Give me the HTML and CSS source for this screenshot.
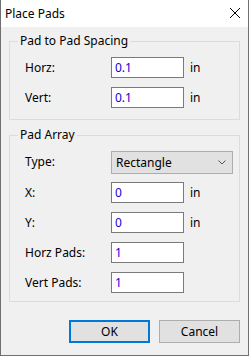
FILE: index.html
```html
<!DOCTYPE html>
<html lang="en">
<head>
    <meta charset="UTF-8">
    <title>Place Pads</title>
    <link rel="stylesheet" href="styles.css">
</head>
<body>
    <div class="window">
        <div class="titlebar">
            <span class="title">Place Pads</span>
            <svg class="close" width="12" height="12" viewBox="0 0 12 12">
                <path d="M1 1 L11 11 M11 1 L1 11" stroke="#000" stroke-width="1" fill="none"/>
            </svg>
        </div>

        <div class="client">
            <!-- 패드 간격 -->
            <fieldset class="group spacing">
                <legend>Pad to Pad Spacing</legend>
                <label>Horz:</label>
                <input type="text" value="0.1">
                <span class="unit">in</span>
                <label>Vert:</label>
                <input type="text" value="0.1">
                <span class="unit">in</span>
            </fieldset>

            <!-- 패드 배열 -->
            <fieldset class="group array">
                <legend>Pad Array</legend>
                <label>Type:</label>
                <div class="combo">
                    <span>Rectangle</span>
                    <svg width="8" height="5" viewBox="0 0 8 5">
                        <path d="M0.5 0.5 L4 4 L7.5 0.5" stroke="#555" stroke-width="1" fill="none"/>
                    </svg>
                </div>
                <label>X:</label>
                <input type="text" value="0">
                <span class="unit">in</span>
                <label>Y:</label>
                <input type="text" value="0">
                <span class="unit">in</span>
                <label>Horz Pads:</label>
                <input type="text" value="1">
                <span></span>
                <label>Vert Pads:</label>
                <input type="text" value="1">
                <span></span>
            </fieldset>

            <div class="buttons">
                <button class="btn default">OK</button>
                <button class="btn">Cancel</button>
            </div>
        </div>
    </div>
</body>
</html>
```

FILE: styles.css
```css
* {
    margin: 0;
    padding: 0;
    box-sizing: border-box;
}

body {
    font-family: "Noto Sans", "Liberation Sans", sans-serif;
    font-size: 12px;
    color: #000;
    background: #f0f0f0;
}

/* 창 틀 */
.window {
    width: 249px;
    height: 356px;
    border: 1px solid #6f6f6f;
    border-top: 0;
    display: flex;
    flex-direction: column;
}

.titlebar {
    height: 27px;
    background: #fff;
    display: flex;
    align-items: center;
    justify-content: space-between;
    padding: 0 7px 1px 4px;
}

.close {
    display: block;
}

.client {
    flex: 1;
    background: #f0f0f0;
    padding: 6px 8px 0;
    display: flex;
    flex-direction: column;
}

/* 그룹 박스 */
.group {
    border: 1px solid #dcdcdc;
    padding: 8px 6px 11px 15px;
    display: grid;
    grid-template-columns: 86px 73px auto;
    row-gap: 9px;
    align-items: center;
}

.group legend {
    padding: 0 2px;
    margin-left: -7px;
    line-height: 16px;
}

.group.array {
    margin-top: 7px;
    padding-bottom: 8px;
}

.group label {
    line-height: 16px;
}

.group input {
    width: 73px;
    height: 21px;
    border: 1px solid #7a7a7a;
    background: #fff;
    font: inherit;
    color: #1400d4;
    padding: 0 3px;
    outline: none;
}

.unit {
    padding-left: 6px;
}

.combo {
    grid-column: 2 / 4;
    width: 122px;
    height: 23px;
    border: 1px solid #adadad;
    background: #e1e1e1;
    display: flex;
    align-items: center;
    justify-content: space-between;
    padding: 0 6px 0 4px;
    margin-bottom: -1px;
}

.combo svg {
    display: block;
}

/* 버튼 */
.buttons {
    display: flex;
    justify-content: flex-end;
    gap: 9px;
    margin-top: 18px;
}

.btn {
    width: 81px;
    height: 23px;
    border: 1px solid #adadad;
    background: #e1e1e1;
    font: inherit;
    color: #000;
}

.btn.default {
    border: 2px solid #0078d7;
}
```
